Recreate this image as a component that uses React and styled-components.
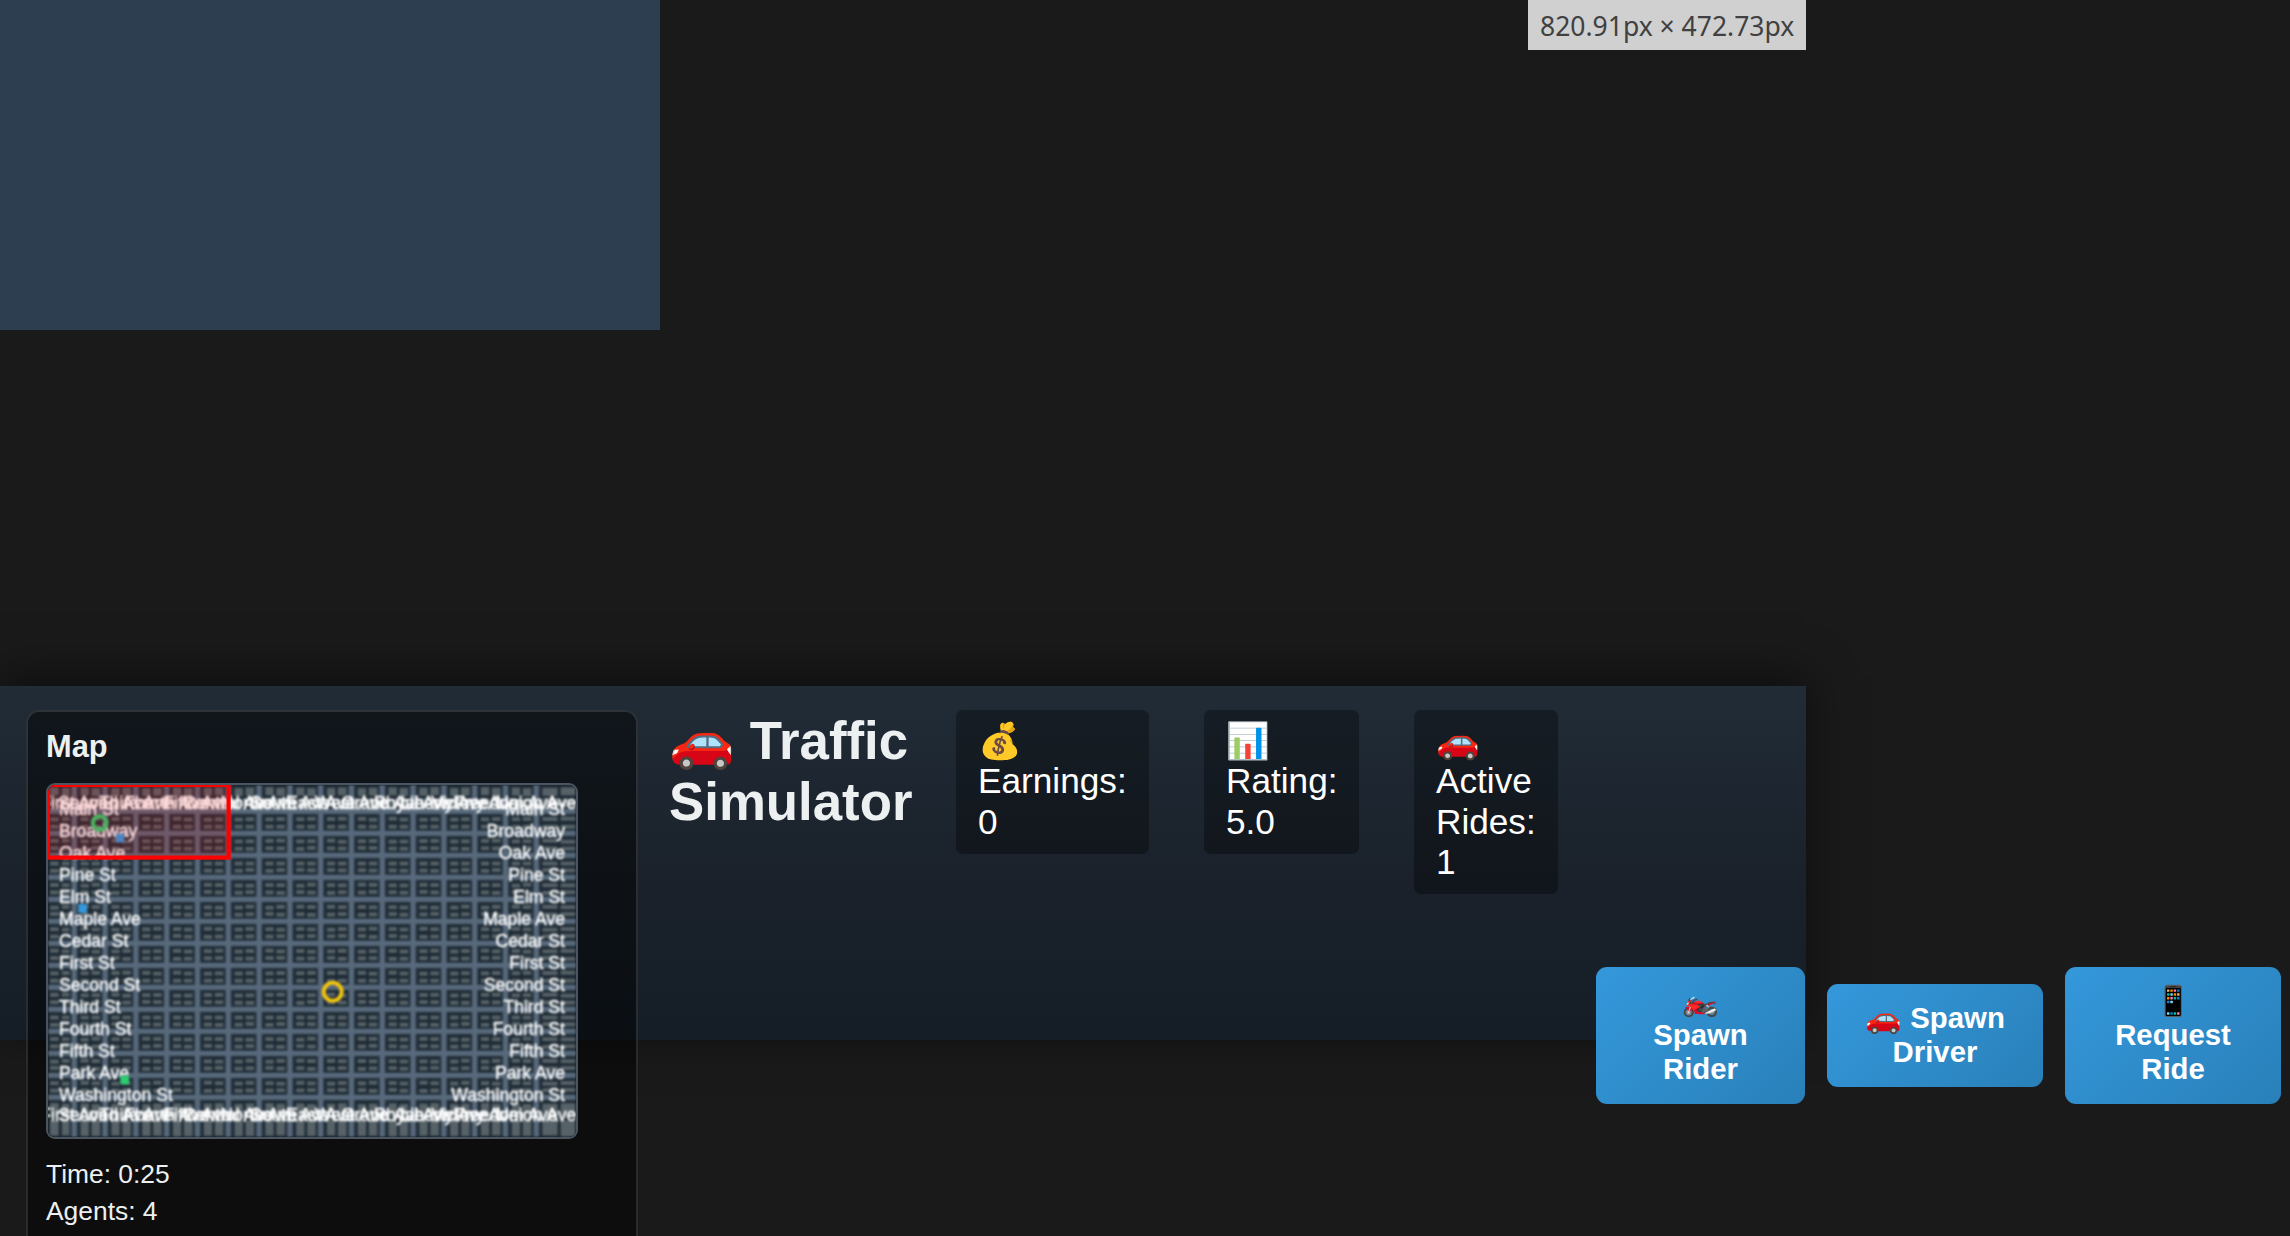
import React from "react";
import styled, { createGlobalStyle } from "styled-components";

const Global = createGlobalStyle`
  * { box-sizing: border-box; }
  body {
    margin: 0;
    background: #1a1a1a;
    font-family: "Liberation Sans", Arial, sans-serif;
    color: #ecf0f1;
    overflow: hidden;
  }
`;

const Page = styled.main`
  position: relative;
  width: 2290px;
  height: 1236px;
  overflow: hidden;
  display: flex;
  flex-direction: column;
  justify-content: space-between;
`;

const World = styled.div`
  width: 660px;
  height: 330px;
  background: #2c3e50;
`;

const SizeBadge = styled.div`
  position: absolute;
  top: 0;
  left: 1528px;
  width: 278px;
  height: 50px;
  padding-left: 12px;
  background: #d0d0d0;
  color: #404040;
  font: 26.5px/53px "Noto Sans", sans-serif;
  white-space: nowrap;
`;

const Toolbar = styled.header`
  display: flex;
  align-items: flex-start;
  width: 1806px;
  height: 354px;
  margin-bottom: 196px;
  padding: 24px 0 0 26px;
  background: linear-gradient(180deg, #212c36 0%, #1a212b 55%, #151e27 100%);
  box-shadow: 0 -9px 44px rgba(0, 0, 0, 0.5);
`;

const Panel = styled.aside`
  flex: none;
  width: 612px;
  height: 560px;
  padding: 17px 18px;
  background: rgba(0, 0, 0, 0.47);
  border: 2px solid rgba(255, 255, 255, 0.12);
  border-radius: 13px;
`;

const PanelTitle = styled.h3`
  margin: 0 0 19px;
  font-size: 30.8px;
  line-height: 35px;
`;

const Map = styled.div`
  width: 532px;
  height: 356px;
  border: 2px solid #4a5561;
  border-radius: 9px;
  overflow: hidden;
  margin-bottom: 17px;
  svg { display: block; }
`;

const Info = styled.div`
  font-size: 26.4px;
  line-height: 37px;
`;

const Title = styled.h1`
  flex: none;
  width: 287px;
  margin: 0 0 0 31px;
  font-size: 52.8px;
  line-height: 61px;
`;

const Stats = styled.div`
  display: flex;
  align-items: flex-start;
  gap: 55px;
  flex: none;
`;

const Stat = styled.div`
  width: ${(p) => p.$width}px;
  padding: 11px 19px 12px 22px;
  background: rgba(0, 0, 0, 0.32);
  border-radius: 6.6px;
  color: #fff;
  font-size: 35.2px;
  line-height: 40.3px;
`;

const Controls = styled.div`
  display: flex;
  align-items: center;
  gap: 22px;
  flex: none;
  margin: 257px 0 0 38px;
`;

const Button = styled.button`
  width: ${(p) => p.$width}px;
  padding: 17px 20px 18px;
  border: 0;
  border-radius: 11px;
  background: linear-gradient(135deg, #3498db, #2980b9);
  color: #fff;
  font: bold 29.33px/34px "Liberation Sans", Arial, sans-serif;
  text-align: center;
`;

const streets = [
  "Main St", "Broadway", "Oak Ave", "Pine St", "Elm St", "Maple Ave", "Cedar St",
  "First St", "Second St", "Third St", "Fourth St", "Fifth St", "Park Ave", "Washington St",
];
const avenues = [
  "First Ave", "Second Ave", "Third Ave", "Fourth Ave", "Fifth Ave", "Central Ave",
  "North Ave", "South Ave", "East Ave", "West Ave", "Grand Ave", "Royal Ave",
  "Liberty Ave", "Victory Ave", "Freedom Ave", "Union Ave",
];

const roadX = avenues.map((_, i) => 26.3 + i * 30.8);
const roadY = streets.map((_, i) => 26.4 + i * 22);
const jitter = (a, b) => (((a * 37 + b * 53 + a * b * 11) % 7) - 3) * 0.17;

function Buildings() {
  const cols = [[2, 10.8, 13.8, 21.5]];
  roadX.slice(0, -1).forEach((x) => cols.push([x + 6.2, x + 14.6, x + 17.2, x + 25.8]));
  cols.push([494.3, 509.6, 512.6, 527.4]);
  const rows = [[2.6, 10.8, 13.6, 21.5]];
  roadY.slice(0, -1).forEach((y) => rows.push([y + 5.8, y + 9.8, y + 13, y + 17]));
  rows.push([318.5, 333, 335, 351]);
  const out = [];
  cols.forEach((c, i) =>
    rows.forEach((r, j) => {
      [0, 2].forEach((a) =>
        [0, 2].forEach((b) => {
          out.push(
            <rect
              key={`${i}-${j}-${a}-${b}`}
              x={c[a]}
              y={r[b] + jitter(i + a, j + b)}
              width={c[a + 1] - c[a]}
              height={r[b + 1] - r[b]}
            />
          );
        })
      );
    })
  );
  return <g fill="#566267">{out}</g>;
}

function Blocks() {
  const xs = [-4.4, ...roadX, 532.4];
  const ys = [-4.4, ...roadY, 356.4];
  const out = [];
  for (let i = 0; i < xs.length - 1; i++)
    for (let j = 0; j < ys.length - 1; j++)
      out.push(
        <rect key={`${i}-${j}`} x={xs[i] + 3.9} y={ys[j] + 3.5}
          width={xs[i + 1] - xs[i] - 7.8} height={ys[j + 1] - ys[j] - 7} />
      );
  return <g fill="#1e2a34">{out}</g>;
}

function MiniMap() {
  return (
    <svg width="528" height="352" viewBox="0 0 528 352">
      <defs>
        <filter id="soft" x="0" y="0" width="528" height="352" filterUnits="userSpaceOnUse" colorInterpolationFilters="sRGB">
          <feGaussianBlur stdDeviation="0.85" />
        </filter>
      </defs>
      <g filter="url(#soft)">
        <rect width="528" height="352" fill="#2c3c49" />
        <Blocks />
        <Buildings />
        <g stroke="#58697b" strokeWidth="4.8">
          {roadX.map((x) => <line key={x} x1={x} x2={x} y1="0" y2="352" />)}
          {roadY.map((y) => <line key={y} x1="0" x2="528" y1={y} y2={y} />)}
        </g>
        <g fill="#fff" stroke="#fff" strokeWidth="0.35" fontSize="17.6" fontFamily="Liberation Sans, Arial, sans-serif">
          {streets.map((s, i) => (
            <React.Fragment key={s}>
              <text x="11" y={roadY[i] + 4}>{s}</text>
              <text x="517" y={roadY[i] + 4} textAnchor="end">{s}</text>
            </React.Fragment>
          ))}
          {avenues.map((s, i) => (
            <React.Fragment key={s}>
              <text x={roadX[i]} y="23.5" textAnchor="middle">{s}</text>
              <text x={roadX[i]} y="335.5" textAnchor="middle">{s}</text>
            </React.Fragment>
          ))}
        </g>
        <rect x="30.3" y="119" width="8.8" height="8.8" fill="#3498db" />
        <rect x="67.6" y="48.8" width="8.8" height="8.8" fill="#3498db" />
        <rect x="72.3" y="290.6" width="8.8" height="8.8" fill="#2ecc71" />
        <circle cx="51.7" cy="38" r="6.8" fill="none" stroke="#2ecc71" strokeWidth="4.4" />
        <circle cx="284.7" cy="206.7" r="9" fill="none" stroke="#f1c40f" strokeWidth="4" />
      </g>
      <rect x="0" y="0" width="180.6" height="72.6" fill="rgba(255,0,0,0.14)" stroke="#f00" strokeWidth="4.2" />
    </svg>
  );
}

export default function App() {
  return (
    <Page>
      <Global />
      <World />
      <SizeBadge>820.91px × 472.73px</SizeBadge>
      <Toolbar>
        <Panel>
          <PanelTitle>Map</PanelTitle>
          <Map><MiniMap /></Map>
          <Info>Time: 0:25</Info>
          <Info>Agents: 4</Info>
        </Panel>
        <Title>🚗 Traffic Simulator</Title>
        <Stats>
          <Stat $width={193}>💰 Earnings: 0</Stat>
          <Stat $width={155}>📊 Rating: 5.0</Stat>
          <Stat $width={144}>🚗 Active Rides: 1</Stat>
        </Stats>
        <Controls>
          <Button $width={209}>🏍️<br />Spawn Rider</Button>
          <Button $width={216}>🚗 Spawn Driver</Button>
          <Button $width={216}>📱<br />Request Ride</Button>
        </Controls>
      </Toolbar>
    </Page>
  );
}
